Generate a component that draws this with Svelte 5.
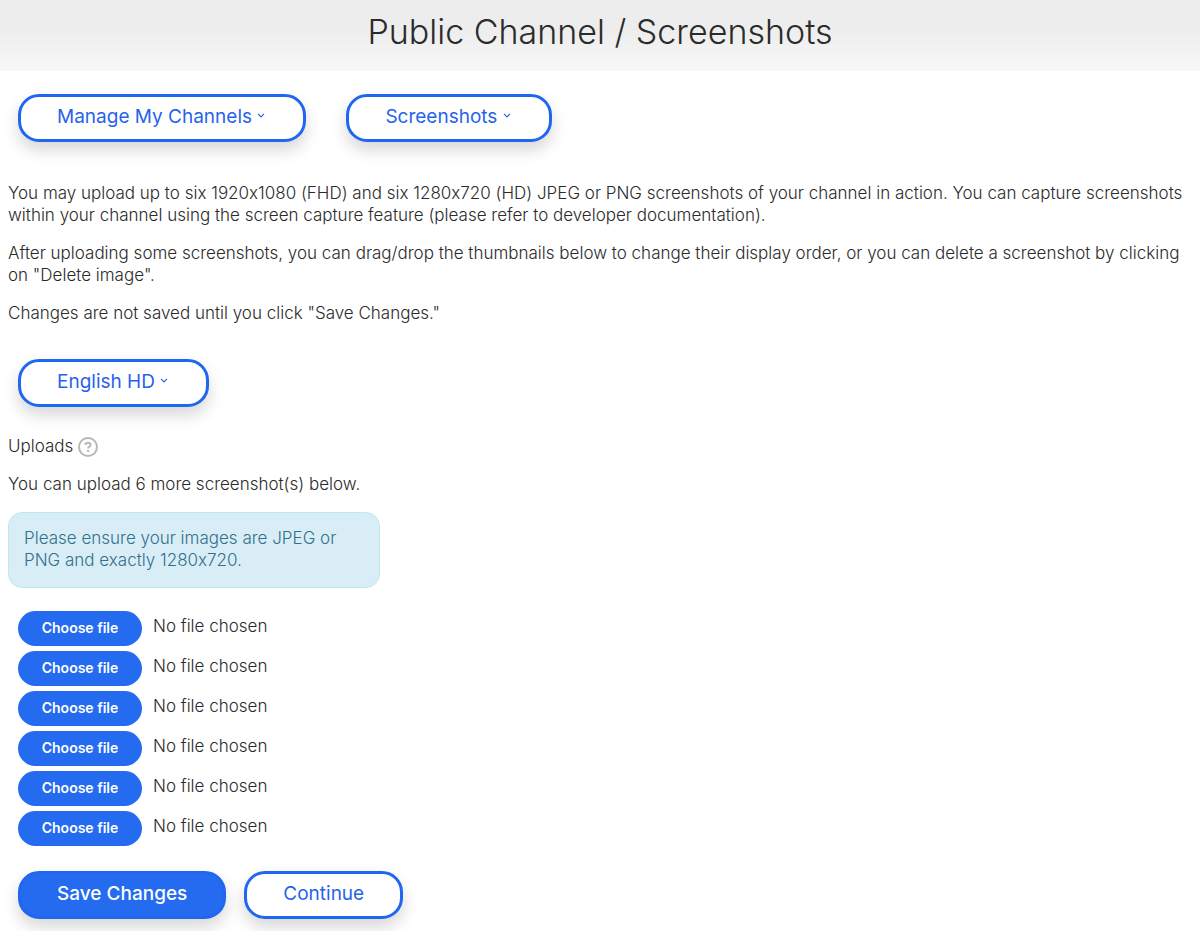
<script>
  const slots = [1, 2, 3, 4, 5, 6];
  let chosen = $state({});

  function pick(slot, event) {
    chosen[slot] = event.currentTarget.files[0]?.name;
  }
</script>

{#snippet chevron()}
  <svg class="chevron" viewBox="0 0 8 5" aria-hidden="true">
    <path d="M1 0.8 4 3.8 7 0.8" />
  </svg>
{/snippet}

<div class="page">
  <header>
    <h1>Public Channel / Screenshots</h1>
  </header>

  <main>
    <nav class="menus">
      <button type="button" class="btn menu">Manage My Channels {@render chevron()}</button>
      <button type="button" class="btn menu">Screenshots {@render chevron()}</button>
    </nav>

    <section class="intro">
      <p>
        You may upload up to six 1920x1080 (FHD) and six 1280x720 (HD) JPEG or PNG screenshots of
        your channel in action. You can capture screenshots within your channel using the screen
        capture feature (please refer to developer documentation).
      </p>
      <p>
        After uploading some screenshots, you can drag/drop the thumbnails below to change their
        display order, or you can delete a screenshot by clicking on "Delete image".
      </p>
      <p>Changes are not saved until you click "Save Changes."</p>
    </section>

    <div class="menus language">
      <button type="button" class="btn menu">English HD {@render chevron()}</button>
    </div>

    <form onsubmit={(event) => event.preventDefault()}>
      <div class="heading">
        <span>Uploads</span>
        <button type="button" class="help" aria-label="Help">
          <svg viewBox="0 0 20 20" aria-hidden="true">
            <circle cx="10" cy="10" r="9" />
            <path d="M7.4 8C7.4 6.5 8.6 5.8 10 5.8s2.6.8 2.6 2.1c0 1.8-2.5 1.7-2.5 3.6" />
            <path d="M10.1 13v2.1" />
          </svg>
        </button>
      </div>
      <p class="remaining">You can upload 6 more screenshot(s) below.</p>
      <p class="notice">Please ensure your images are JPEG or PNG and exactly 1280x720.</p>

      <ul>
        {#each slots as slot}
          <li>
            <input
              type="file"
              id="screenshot-{slot}"
              accept="image/jpeg,image/png"
              onchange={(event) => pick(slot, event)}
            />
            <label for="screenshot-{slot}">Choose file</label>
            <span>{chosen[slot] ?? 'No file chosen'}</span>
          </li>
        {/each}
      </ul>

      <div class="actions">
        <button type="submit" class="btn primary">Save Changes</button>
        <button type="button" class="btn">Continue</button>
      </div>
    </form>
  </main>
</div>

<style>
  :global(body) {
    margin: 0;
    background: #fff;
  }

  .page {
    color: #2b2b2b;
    font-family: Inter, Lato, sans-serif;
    font-size: 17px;
    font-weight: 300;
    font-feature-settings: 'calt' 0;
    line-height: 22px;
  }

  header {
    padding: 10px 16px 17px;
    background: linear-gradient(#ededed 40%, #f7f7f7);
    text-align: center;
  }

  h1 {
    margin: 0;
    font-size: 34px;
    font-weight: 300;
    line-height: 44px;
  }

  main {
    padding: 23px 8px 12px;
    overflow: hidden;
  }

  p {
    margin: 0;
  }

  .menus {
    display: flex;
    flex-wrap: wrap;
    gap: 40px;
    padding-left: 10px;
  }

  .btn {
    box-sizing: border-box;
    height: 48px;
    padding: 0 36px 3px;
    border: 3px solid #1f66f0;
    border-radius: 21px;
    background: #fff;
    box-shadow: 0 8px 16px rgba(0, 0, 0, 0.16);
    color: #2763ea;
    font: 400 19px/24px Inter, Lato, sans-serif;
    white-space: nowrap;
    cursor: pointer;
  }

  .btn.menu {
    padding-right: 38px;
  }

  .btn.primary {
    background: #246bf0;
    color: #fff;
    font-weight: 500;
  }

  .chevron {
    width: 8px;
    height: 5px;
    vertical-align: 5px;
    fill: none;
    stroke: currentColor;
    stroke-width: 1.2;
  }

  .intro {
    display: grid;
    gap: 16px;
    margin-top: 40px;
  }

  .language {
    margin-top: 35px;
  }

  .heading {
    display: flex;
    align-items: center;
    gap: 5px;
    margin-top: 28px;
  }

  .heading span {
    padding-bottom: 2px;
  }

  .help {
    display: flex;
    padding: 0;
    border: 0;
    background: none;
    cursor: pointer;
  }

  .help svg {
    width: 20px;
    height: 20px;
    fill: none;
    stroke: #b8b8b8;
    stroke-width: 2;
  }

  .remaining {
    margin-top: 14px;
  }

  .notice {
    box-sizing: border-box;
    max-width: 372px;
    margin-top: 17px;
    padding: 14px 15px 16px;
    border: 1px solid #bce8f1;
    border-radius: 14px;
    background: #d9edf6;
    color: #31708f;
  }

  ul {
    display: grid;
    gap: 5px;
    margin: 23px 0 0;
    padding: 0 0 0 10px;
    list-style: none;
  }

  li {
    display: flex;
    align-items: center;
    gap: 11px;
  }

  input {
    position: absolute;
    width: 1px;
    height: 1px;
    opacity: 0;
  }

  label {
    box-sizing: border-box;
    min-width: 124px;
    padding: 6px 20px 7px;
    border-radius: 18px;
    background: #246bf0;
    color: #fff;
    font-size: 14px;
    font-weight: 600;
    text-align: center;
    cursor: pointer;
  }

  li span {
    padding-bottom: 6px;
  }

  input:focus-visible + label {
    outline: 2px solid #9dbdf9;
  }

  .actions {
    display: flex;
    gap: 18px;
    margin-top: 25px;
    padding-left: 10px;
  }
</style>
